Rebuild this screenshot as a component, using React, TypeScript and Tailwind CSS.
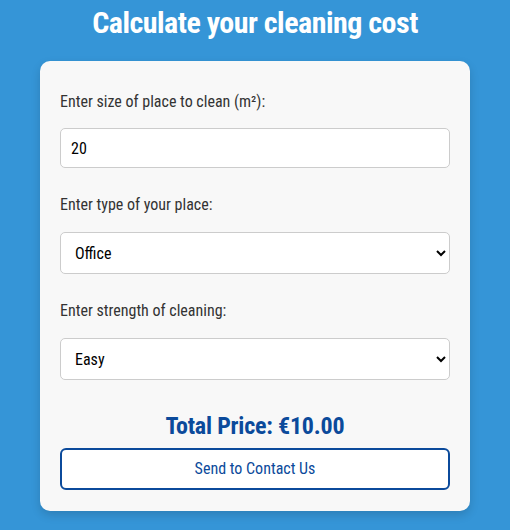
import { useState } from "react";

const PRICES: Record<string, number> = { Office: 0.5, Apartment: 0.4, House: 0.45 };
const STRENGTH: Record<string, number> = { Easy: 1, Medium: 1.5, Deep: 2 };

export default function App() {
  const [size, setSize] = useState("20");
  const [type, setType] = useState("Office");
  const [strength, setStrength] = useState("Easy");

  const total = (parseFloat(size) || 0) * PRICES[type] * STRENGTH[strength];

  return (
    <div
      className="min-h-[530px] bg-[#3595d7] flex flex-col items-center font-stretch-condensed"
      style={{ fontFamily: '"Roboto Condensed", Roboto, "Liberation Sans", sans-serif' }}
    >
      <h1 className="pt-2 mb-[23px] text-[30px] leading-none font-bold tracking-[-0.5px] text-white">
        Calculate your cleaning cost
      </h1>

      <div className="w-[430px] rounded-[10px] bg-[#f8f8f8] pt-[29px] px-5 pb-[21px] shadow-[0_4px_10px_rgba(0,0,0,0.15)]">
        <label className="block text-base leading-6 text-[#333] mb-[14px]">Enter size of place to clean (m²):</label>
        <input
          type="number"
          value={size}
          onChange={(e) => setSize(e.target.value)}
          className="block w-full h-10 px-[10px] text-base text-black bg-white border border-[#ccc] rounded-[5px] outline-none [appearance:textfield]"
        />

        <label className="block mt-[25px] mb-[15px] text-base leading-6 text-[#333]">Enter type of your place:</label>
        <select
          value={type}
          onChange={(e) => setType(e.target.value)}
          className="block w-full h-[42px] px-[10px] text-base text-black bg-white border border-[#ccc] rounded-[5px] outline-none"
        >
          <option>Office</option>
          <option>Apartment</option>
          <option>House</option>
        </select>

        <label className="block mt-[25px] mb-[15px] text-base leading-6 text-[#333]">Enter strength of cleaning:</label>
        <select
          value={strength}
          onChange={(e) => setStrength(e.target.value)}
          className="block w-full h-[42px] px-[10px] text-base text-black bg-white border border-[#ccc] rounded-[5px] outline-none"
        >
          <option>Easy</option>
          <option>Medium</option>
          <option>Deep</option>
        </select>

        <p className="mt-[30px] mb-[6px] text-center text-2xl leading-8 font-bold tracking-[-0.2px] text-[#0b4a9b]">
          Total Price: €{total.toFixed(2)}
        </p>
        <button className="block w-full h-[42px] bg-white border-2 border-[#0b4a9b] rounded-[6px] text-base text-[#0b4a9b]">
          Send to Contact Us
        </button>
      </div>
    </div>
  );
}
